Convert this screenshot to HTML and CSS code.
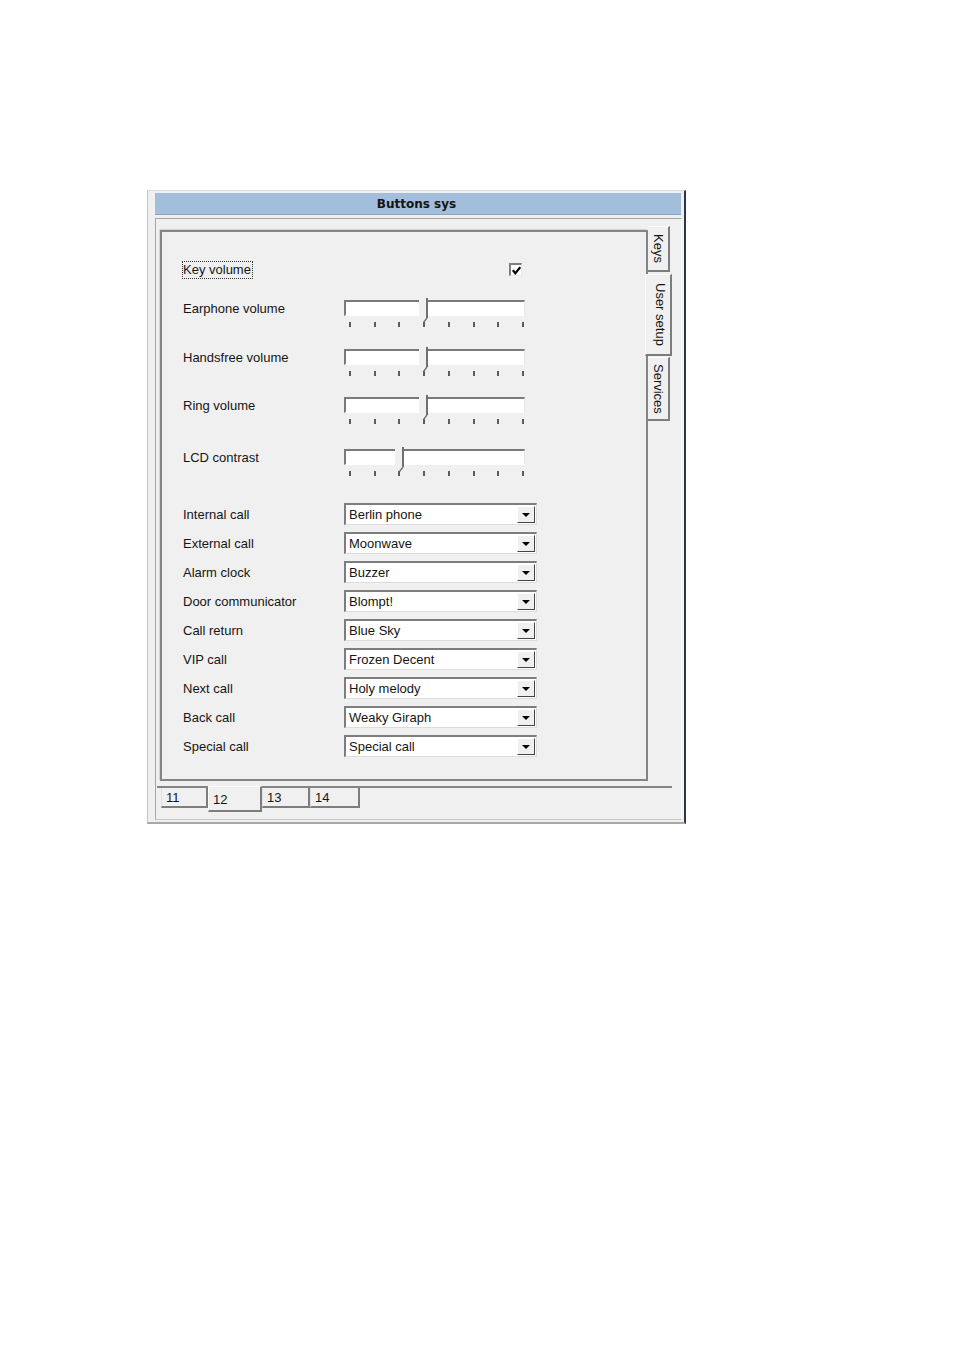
FILE: index.html
```html
<!DOCTYPE html>
<html>
<head>
<meta charset="utf-8">
<title>Buttons sys</title>
<link rel="stylesheet" href="styles.css">
</head>
<body>
<div class="window">
  <div class="titlebar">Buttons sys</div>
  <div class="frame">
    <div class="main">
      <div class="panel">
        <div class="row row-check">
          <span class="lbl"><span class="focus">Key volume</span></span>
          <span class="checkbox"><svg width="9" height="9" viewBox="0 0 9 9"><polyline points="0.8,4.3 3.3,7.2 8.3,1.2" fill="none" stroke="#000" stroke-width="2.2"/></svg></span>
        </div>

        <div class="row row-slider s1">
          <span class="lbl">Earphone volume</span>
          <div class="slider">
            <div class="track"></div>
            <div class="ticks"><i></i><i></i><i></i><i></i><i></i><i></i><i></i><i></i></div>
            <svg class="thumb" style="left:75px" width="12" height="26" viewBox="0 0 12 26"><rect x="0" y="0" width="7" height="20" fill="#f0f0f0"/><rect x="7" y="0" width="2" height="20" fill="#707070"/><line x1="8" y1="20" x2="4.5" y2="24.5" stroke="#707070" stroke-width="1.3"/></svg>
          </div>
        </div>

        <div class="row row-slider s2">
          <span class="lbl">Handsfree volume</span>
          <div class="slider">
            <div class="track"></div>
            <div class="ticks"><i></i><i></i><i></i><i></i><i></i><i></i><i></i><i></i></div>
            <svg class="thumb" style="left:75px" width="12" height="26" viewBox="0 0 12 26"><rect x="0" y="0" width="7" height="20" fill="#f0f0f0"/><rect x="7" y="0" width="2" height="20" fill="#707070"/><line x1="8" y1="20" x2="4.5" y2="24.5" stroke="#707070" stroke-width="1.3"/></svg>
          </div>
        </div>

        <div class="row row-slider s3">
          <span class="lbl">Ring volume</span>
          <div class="slider">
            <div class="track"></div>
            <div class="ticks"><i></i><i></i><i></i><i></i><i></i><i></i><i></i><i></i></div>
            <svg class="thumb" style="left:75px" width="12" height="26" viewBox="0 0 12 26"><rect x="0" y="0" width="7" height="20" fill="#f0f0f0"/><rect x="7" y="0" width="2" height="20" fill="#707070"/><line x1="8" y1="20" x2="4.5" y2="24.5" stroke="#707070" stroke-width="1.3"/></svg>
          </div>
        </div>

        <div class="row row-slider s4">
          <span class="lbl">LCD contrast</span>
          <div class="slider">
            <div class="track"></div>
            <div class="ticks"><i></i><i></i><i></i><i></i><i></i><i></i><i></i><i></i></div>
            <svg class="thumb" style="left:51px" width="12" height="26" viewBox="0 0 12 26"><rect x="0" y="0" width="7" height="20" fill="#f0f0f0"/><rect x="7" y="0" width="2" height="20" fill="#707070"/><line x1="8" y1="20" x2="4.5" y2="24.5" stroke="#707070" stroke-width="1.3"/></svg>
          </div>
        </div>

        <div class="combos">
          <div class="row row-combo"><span class="lbl">Internal call</span><div class="combo"><span class="val">Berlin phone</span><span class="btn"><i class="arrow"></i></span></div></div>
          <div class="row row-combo"><span class="lbl">External call</span><div class="combo"><span class="val">Moonwave</span><span class="btn"><i class="arrow"></i></span></div></div>
          <div class="row row-combo"><span class="lbl">Alarm clock</span><div class="combo"><span class="val">Buzzer</span><span class="btn"><i class="arrow"></i></span></div></div>
          <div class="row row-combo"><span class="lbl">Door communicator</span><div class="combo"><span class="val">Blompt!</span><span class="btn"><i class="arrow"></i></span></div></div>
          <div class="row row-combo"><span class="lbl">Call return</span><div class="combo"><span class="val">Blue Sky</span><span class="btn"><i class="arrow"></i></span></div></div>
          <div class="row row-combo"><span class="lbl">VIP call</span><div class="combo"><span class="val">Frozen Decent</span><span class="btn"><i class="arrow"></i></span></div></div>
          <div class="row row-combo"><span class="lbl">Next call</span><div class="combo"><span class="val">Holy melody</span><span class="btn"><i class="arrow"></i></span></div></div>
          <div class="row row-combo"><span class="lbl">Back call</span><div class="combo"><span class="val">Weaky Giraph</span><span class="btn"><i class="arrow"></i></span></div></div>
          <div class="row row-combo"><span class="lbl">Special call</span><div class="combo"><span class="val">Special call</span><span class="btn"><i class="arrow"></i></span></div></div>
        </div>
      </div>

      <div class="vtabs">
        <div class="vtab t-keys">Keys</div>
        <div class="vtab t-user active">User setup</div>
        <div class="vtab t-serv">Services</div>
      </div>
    </div>

    <div class="htabs">
      <div class="htab h11">11</div>
      <div class="htab h12 active">12</div>
      <div class="htab h13">13</div>
      <div class="htab h14">14</div>
    </div>
  </div>
</div>
</body>
</html>
```

FILE: styles.css
```css
html, body {
  margin: 0;
  padding: 0;
  background: #ffffff;
}

body {
  font-family: "Liberation Sans", Arial, sans-serif;
  font-size: 13px;
  color: #151515;
}

.window {
  box-sizing: border-box;
  width: 539px;
  height: 634px;
  margin: 190px 0 0 147px;
  background: #f0f0f0;
  border-left: 1px solid #c4c4c4;
  border-top: 1px solid #dcdcdc;
  border-right: 2px solid #2c3650;
  border-bottom: 2px solid #a8a8a8;
  padding: 2px 2px 0 7px;
}

.titlebar {
  box-sizing: border-box;
  height: 22px;
  margin-right: 1px;
  background: #a3bedb;
  border-bottom: 1px solid #8ca7c5;
  font-family: "DejaVu Sans", Verdana, sans-serif;
  font-weight: bold;
  font-size: 12px;
  line-height: 22px;
  text-align: center;
  padding-right: 3px;
  color: #141414;
}

.frame {
  box-sizing: border-box;
  height: 602px;
  margin-top: 3px;
  border-left: 1px solid #a6a6a6;
  border-top: 1px solid #a6a6a6;
  border-right: 1px solid #fbfbfb;
  border-bottom: 1px solid #c6c6c6;
  padding: 7px 0 0 4px;
}

.main {
  display: flex;
  align-items: flex-start;
}

.panel {
  box-sizing: border-box;
  width: 488px;
  height: 551px;
  margin-top: 4px;
  border: 2px solid #858585;
  box-shadow: -1px -1px 0 #d4d4d4;
  padding: 28px 0 0 21px;
}

.row {
  display: flex;
}

.lbl {
  flex: none;
  width: 161px;
  white-space: nowrap;
}

/* checkbox row */
.row-check {
  height: 20px;
  align-items: center;
}

.focus {
  display: inline-block;
  margin-left: -1px;
  padding: 0 1px 0 0;
  border: 1px dotted #333;
  line-height: 16px;
}

.checkbox {
  box-sizing: border-box;
  width: 13px;
  height: 13px;
  margin-left: 165px;
  margin-top: -1px;
  background: #ffffff;
  border-top: 2px solid #7e7e7e;
  border-left: 2px solid #7e7e7e;
  border-right: 1px solid #e8e8e8;
  border-bottom: 1px solid #e8e8e8;
  display: flex;
  align-items: center;
  justify-content: center;
}

.checkbox svg {
  display: block;
}

/* sliders */
.row-slider {
  align-items: flex-start;
}

.row-slider .lbl {
  line-height: 16px;
  padding-top: 1px;
}

.s1 { margin-top: 20px; }
.s2 { margin-top: 22px; }
.s3 { margin-top: 21px; }
.s4 { margin-top: 25px; }

.slider {
  position: relative;
  width: 182px;
}

.track {
  box-sizing: border-box;
  width: 181px;
  height: 16px;
  background: #ffffff;
  border-top: 2px solid #7a7a7a;
  border-left: 2px solid #7a7a7a;
  border-right: 1px solid #e6e6e6;
  border-bottom: 1px solid #ffffff;
}

.ticks {
  display: flex;
  justify-content: space-between;
  width: 175px;
  margin: 6px 0 0 5px;
}

.ticks i {
  display: block;
  width: 2px;
  height: 5px;
  background: #5c5c5c;
}

.thumb {
  position: absolute;
  top: -2px;
  display: block;
}

/* combos */
.combos {
  margin-top: 27px;
}

.row-combo {
  height: 22px;
  align-items: center;
  margin-bottom: 7px;
}

.combo {
  box-sizing: border-box;
  width: 193px;
  height: 22px;
  display: flex;
  align-items: center;
  background: #ffffff;
  border-top: 2px solid #7d7d7d;
  border-left: 2px solid #7d7d7d;
  border-right: 1px solid #dcdcdc;
  border-bottom: 1px solid #dcdcdc;
}

.val {
  flex: 1;
  padding-left: 3px;
  line-height: 18px;
  white-space: nowrap;
}

.btn {
  box-sizing: border-box;
  width: 18px;
  height: 17px;
  margin-right: 1px;
  background: #f0f0f0;
  border-top: 1px solid #ffffff;
  border-left: 1px solid #ffffff;
  border-right: 1px solid #444444;
  border-bottom: 1px solid #444444;
  display: flex;
  align-items: center;
  justify-content: center;
}

.arrow {
  display: block;
  width: 0;
  height: 0;
  border-left: 4px solid transparent;
  border-right: 4px solid transparent;
  border-top: 4px solid #000000;
}

/* vertical tabs */
.vtabs {
  display: flex;
  flex-direction: column;
  width: 26px;
}

.vtab {
  box-sizing: border-box;
  writing-mode: vertical-rl;
  text-align: center;
  width: 22px;
  line-height: 20px;
  background: #f0f0f0;
  border-top: 1px solid #ffffff;
  border-right: 2px solid #7d7d7d;
  border-bottom: 2px solid #7d7d7d;
  white-space: nowrap;
}

.t-keys {
  height: 46px;
}

.t-user {
  height: 82px;
  margin-top: 2px;
  margin-left: -3px;
  width: 27px;
  border-left: 1px solid #ffffff;
  position: relative;
}

.t-serv {
  height: 64px;
  margin-top: 1px;
}

/* bottom tabs */
.htabs {
  display: flex;
  align-items: flex-start;
  margin: 5px 9px 0 -3px;
  padding-left: 4px;
  border-top: 2px solid #858585;
}

.htab {
  box-sizing: border-box;
  height: 20px;
  padding: 3px 0 0 4px;
  line-height: 13px;
  background: #f0f0f0;
  border-left: 1px solid #e0e0e0;
  border-right: 2px solid #7d7d7d;
  border-bottom: 2px solid #7d7d7d;
}

.h11 { width: 47px; }
.h12 { width: 54px; }
.h13 { width: 48px; }
.h14 { width: 50px; }

.htab.active {
  height: 26px;
  margin-top: -2px;
  padding-top: 6px;
  border-left: 1px solid #ffffff;
  border-top: 1px solid #ffffff;
}
```
